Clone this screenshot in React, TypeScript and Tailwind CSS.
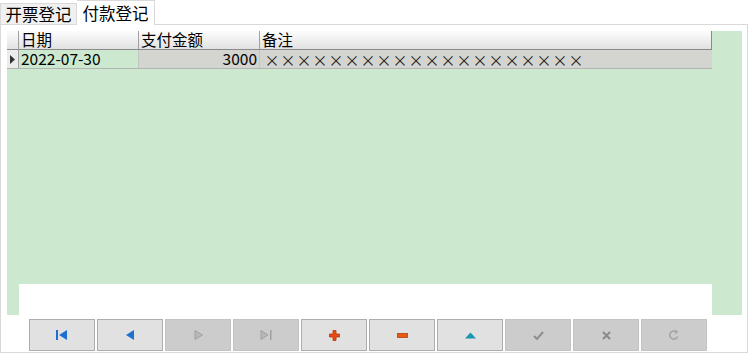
import React from "react";

const font = { fontFamily: '"Noto Sans CJK SC", "Noto Sans", sans-serif' };

function Btn({ enabled, children }: { enabled: boolean; children: React.ReactNode }) {
  return (
    <div
      className={
        "w-[66px] h-[32px] flex items-center justify-center border " +
        (enabled ? "bg-[#e1e1e1] border-[#adadad]" : "bg-[#cccccc] border-[#c4c4c4]")
      }
    >
      {children}
    </div>
  );
}

export default function App() {
  const xs = Array.from({ length: 20 });
  return (
    <div className="w-[750px] h-[355px] bg-white relative overflow-hidden" style={font}>
      {/* tabs */}
      <div className="flex items-end h-[24px]">
        <div className="w-[77px] h-[21px] border border-b-0 border-[#d9d9d9] bg-[#f0f0f0] flex items-center justify-center text-[16.5px] leading-none text-black">
          开票登记
        </div>
        <div className="relative z-10 w-[78px] h-[25px] -mb-px border border-b-0 border-l-0 border-[#d9d9d9] bg-white flex items-center justify-center text-[16.5px] leading-none text-black">
          付款登记
        </div>
      </div>
      {/* panel */}
      <div className="w-[748px] h-[329px] border border-[#d9d9d9] bg-white pl-[6px] pt-[6px] pr-[4px]">
        <div className="w-[735px] h-[284px] bg-[#cce8cf] flex flex-col">
          {/* grid */}
          <div className="w-[705px]">
            <div className="flex h-[19px] bg-gradient-to-b from-[#fdfdfd] to-[#e2e2e2] border-b border-[#8a8a8a] border-r border-r-[#8a8a8a] text-[15.5px] leading-none text-black">
              <div className="w-[12px] border-r border-[#a0a0a0]" />
              <div className="w-[120px] border-r border-[#a0a0a0] pl-[2px] flex items-center">日期</div>
              <div className="w-[121px] border-r border-[#a0a0a0] pl-[2px] flex items-center">支付金额</div>
              <div className="flex-1 pl-[2px] flex items-center">备注</div>
            </div>
            <div className="flex h-[19px] border-b border-[#b4b4b4] text-[15.5px] leading-none text-black">
              <div className="w-[12px] bg-[#ececec] border-r border-[#a0a0a0] flex items-center justify-center">
                <svg width="5" height="9" viewBox="0 0 5 9">
                  <path d="M0 0 L5 4.5 L0 9 Z" fill="#333" />
                </svg>
              </div>
              <div className="w-[120px] bg-[#cce8cf] border-r border-[#c4c4c4] pl-[2px] flex items-center">2022-07-30</div>
              <div className="w-[121px] bg-[#d4d4d0] border-r border-[#c4c4c4] pr-[2px] flex items-center justify-end">3000</div>
              <div className="flex-1 bg-[#d4d4d0] pl-[4px] flex items-center text-[#222]">
                {xs.map((_, i) => (
                  <span key={i} className="inline-block w-[16px] text-center text-[15px]">
                    ×
                  </span>
                ))}
              </div>
            </div>
          </div>
          <div className="flex-1" />
          <div className="ml-[12px] w-[693px] h-[31px] bg-white" />
        </div>
        {/* buttons */}
        <div className="flex gap-[2px] mt-[4px] ml-[22px]">
          <Btn enabled>
            <svg width="12" height="10" viewBox="0 0 12 10">
              <rect x="0" y="0" width="2" height="10" fill="#1f6fd0" />
              <path d="M3 5 L11 0 L11 10 Z" fill="#1f6fd0" />
            </svg>
          </Btn>
          <Btn enabled>
            <svg width="9" height="10" viewBox="0 0 9 10">
              <path d="M0 5 L8 0 L8 10 Z" fill="#1f6fd0" />
            </svg>
          </Btn>
          <Btn enabled={false}>
            <svg width="9" height="10" viewBox="0 0 9 10">
              <path d="M1 0.5 L8.5 5 L1 9.5 Z" fill="#b8b8b8" stroke="#a0a0a0" strokeWidth="1" />
            </svg>
          </Btn>
          <Btn enabled={false}>
            <svg width="12" height="10" viewBox="0 0 12 10">
              <path d="M1 0.5 L8 5 L1 9.5 Z" fill="#b8b8b8" stroke="#a0a0a0" strokeWidth="1" />
              <rect x="10" y="0" width="1.5" height="10" fill="#a0a0a0" />
            </svg>
          </Btn>
          <Btn enabled>
            <svg width="11" height="11" viewBox="0 0 11 11">
              <path d="M4 0.5 H7 V4 H10.5 V7 H7 V10.5 H4 V7 H0.5 V4 H4 Z" fill="#ec4a10" stroke="#b03a10" strokeWidth="0.8" />
            </svg>
          </Btn>
          <Btn enabled>
            <svg width="11" height="5" viewBox="0 0 11 5">
              <rect x="0.5" y="0.5" width="10" height="4" fill="#ec5a10" stroke="#b04010" strokeWidth="0.8" />
            </svg>
          </Btn>
          <Btn enabled>
            <svg width="11" height="7" viewBox="0 0 11 7">
              <path d="M0 6.5 L5.5 0.5 L11 6.5 Z" fill="#1898b0" />
            </svg>
          </Btn>
          <Btn enabled={false}>
            <svg width="11" height="9" viewBox="0 0 11 9">
              <path d="M1 5 L4 8 L10 1" fill="none" stroke="#8e8e8e" strokeWidth="2" />
            </svg>
          </Btn>
          <Btn enabled={false}>
            <svg width="9" height="9" viewBox="0 0 9 9">
              <path d="M1 1 L8 8 M8 1 L1 8" fill="none" stroke="#8a8a8a" strokeWidth="2" />
            </svg>
          </Btn>
          <Btn enabled={false}>
            <svg width="12" height="12" viewBox="0 0 12 12">
              <path d="M9.5 7.5 A4 4 0 1 1 8 2.8" fill="none" stroke="#a8a8a8" strokeWidth="1.8" />
              <path d="M6.5 0.5 L10.5 2.5 L7.5 5.5 Z" fill="#a8a8a8" />
            </svg>
          </Btn>
        </div>
      </div>
    </div>
  );
}
